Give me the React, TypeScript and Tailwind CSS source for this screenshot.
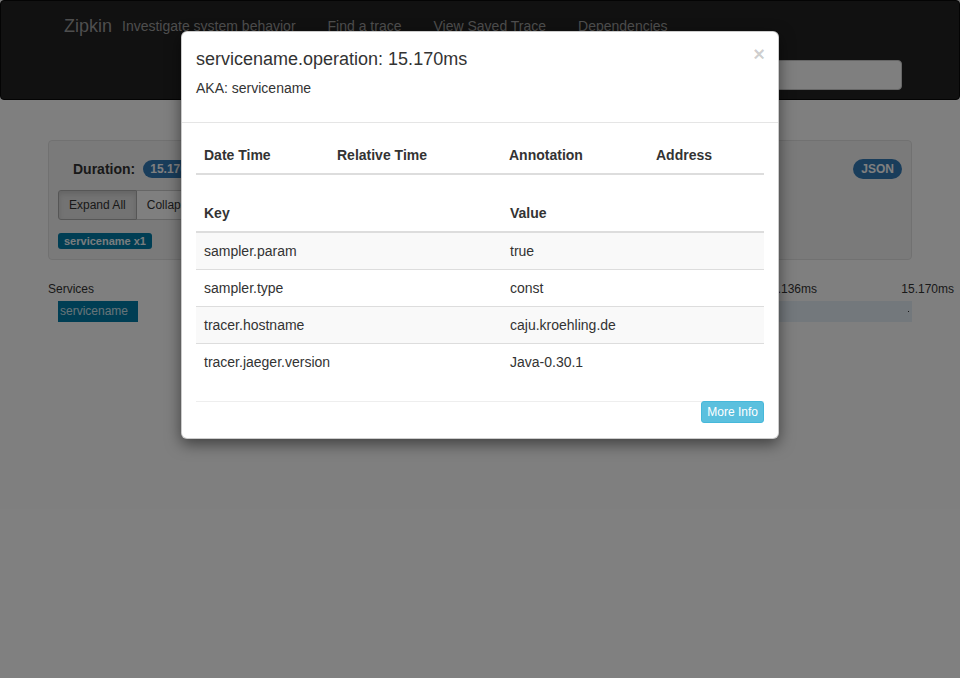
import React from "react";

const headers = ["Date Time", "Relative Time", "Annotation", "Address"];
const headerWidths = ["w-[133px]", "w-[172px]", "w-[147px]", "w-[116px]"];

const tags = [
  { key: "sampler.param", value: "true" },
  { key: "sampler.type", value: "const" },
  { key: "tracer.hostname", value: "caju.kroehling.de" },
  { key: "tracer.jaeger.version", value: "Java-0.30.1" },
];

const Navbar = () => (
  <div className="h-[100px] bg-[#222] border border-[#080808] rounded-[4px] text-[#9d9d9d]">
    <div className="h-[50px] flex items-center pl-[63px]">
      <span className="text-[18px]">Zipkin</span>
      <span className="ml-[10px] text-[14px]">Investigate system behavior</span>
      <span className="ml-[32px] text-[14px]">Find a trace</span>
      <span className="ml-[32px] text-[14px]">View Saved Trace</span>
      <span className="ml-[32px] text-[14px]">Dependencies</span>
    </div>
    <div className="flex justify-end pr-[57px] pt-[9px]">
      <div className="w-[220px] h-[30px] bg-white border border-[#ccc] rounded-[4px]" />
    </div>
  </div>
);

const TracePanel = () => (
  <div className="mx-[48px] mt-[40px] bg-[#f5f5f5] border border-[#e3e3e3] rounded-[4px] pl-[9px] pr-[9px] pt-[17px] pb-[10px]">
    <div className="flex items-center justify-between h-[22px]">
      <div className="flex items-center pl-[15px]">
        <span className="text-[14px] font-bold text-[#333]">Duration:</span>
        <span className="ml-[8px] bg-[#337ab7] text-white text-[12px] font-bold rounded-full px-[7px] h-[18px] leading-[18px]">
          15.170ms
        </span>
      </div>
      <span className="bg-[#337ab7] text-white text-[12px] font-bold rounded-full px-[8px] h-[20px] leading-[20px]">
        JSON
      </span>
    </div>
    <div className="flex mt-[10px]">
      <button className="h-[30px] px-[10px] text-[12px] text-[#333] bg-[#e6e6e6] border border-[#adadad] rounded-l-[3px] shadow-[inset_0_3px_5px_rgba(0,0,0,0.125)]">
        Expand All
      </button>
      <button className="h-[30px] px-[10px] text-[12px] text-[#333] bg-white border border-[#ccc] border-l-0 rounded-r-[3px]">
        Collapse All
      </button>
    </div>
    <div className="mt-[13px] flex">
      <span className="bg-[#007ca8] text-[#f0f8fc] text-[11px] font-bold rounded-[3px] px-[6px] h-[16px] leading-[16px]">
        servicename x1
      </span>
    </div>
  </div>
);

const Timeline = () => (
  <div className="mt-[21px] pl-[48px]">
    <div className="flex h-[16px] items-center text-[12px] text-[#333]">
      <span className="w-[300px]">Services</span>
      <span className="w-[469px] text-right">11.136ms</span>
      <span className="w-[137px] text-right">15.170ms</span>
    </div>
    <div className="flex mt-[4px] h-[21px] pr-[48px]">
      <div className="ml-[10px] w-[80px] bg-[#007ca8] text-[#cfe6f0] text-[12px] leading-[21px] pl-[2px]">
        servicename
      </div>
      <div className="flex-1 ml-[80px] bg-[#e6f0f8] flex items-center justify-end pr-[3px]">
        <span className="w-[1px] h-[1px] bg-[#333]" />
      </div>
    </div>
  </div>
);

const SpanModal = () => (
  <div className="absolute left-[181px] top-[31px] w-[598px] bg-white rounded-[6px] border border-black/20 shadow-[0_5px_15px_rgba(0,0,0,0.5)] text-[#333]">
    <div className="relative px-[14px] pt-[14px] pb-[24px] border-b border-[#e5e5e5]">
      <span className="absolute right-[13px] top-[12px] text-[20px] font-bold leading-none text-black/20">×</span>
      <h4 className="text-[18px] leading-[26px]">servicename.operation: 15.170ms</h4>
      <div className="mt-[6px] text-[14px] leading-[20px]">AKA: servicename</div>
    </div>
    <div className="px-[14px] pt-[14px] pb-[15px]">
      <table className="w-full text-[14px] border-collapse">
        <thead>
          <tr className="border-b-2 border-[#ddd]">
            {headers.map((h, i) => (
              <th key={h} className={`${headerWidths[i]} text-left font-bold px-[8px] py-[8px] leading-[20px]`}>
                {h}
              </th>
            ))}
          </tr>
        </thead>
      </table>
      <table className="w-full mt-[20px] text-[14px] border-collapse">
        <thead>
          <tr className="border-b-2 border-[#ddd]">
            <th className="w-[306px] text-left font-bold px-[8px] py-[8px] leading-[20px]">Key</th>
            <th className="text-left font-bold px-[8px] py-[8px] leading-[20px]">Value</th>
          </tr>
        </thead>
        <tbody>
          {tags.map((t, i) => (
            <tr key={t.key} className={`${i > 0 ? "border-t border-[#ddd]" : ""} ${i % 2 === 0 ? "bg-[#f9f9f9]" : ""}`}>
              <td className="px-[8px] py-[8px] leading-[20px]">{t.key}</td>
              <td className="px-[8px] py-[8px] leading-[20px]">{t.value}</td>
            </tr>
          ))}
        </tbody>
      </table>
      <div className="mt-[21px] border-t border-[#eee] flex justify-end">
        <button className="-mt-px h-[22px] px-[5px] text-[12px] text-white bg-[#5bc0de] border border-[#46b8da] rounded-[3px]">
          More Info
        </button>
      </div>
    </div>
  </div>
);

export default function App() {
  return (
    <div className="relative w-[960px] h-[678px] overflow-hidden bg-white font-['Liberation_Sans',Arial,sans-serif]">
      <Navbar />
      <TracePanel />
      <Timeline />
      <div className="absolute inset-0 bg-black/50" />
      <SpanModal />
    </div>
  );
}
